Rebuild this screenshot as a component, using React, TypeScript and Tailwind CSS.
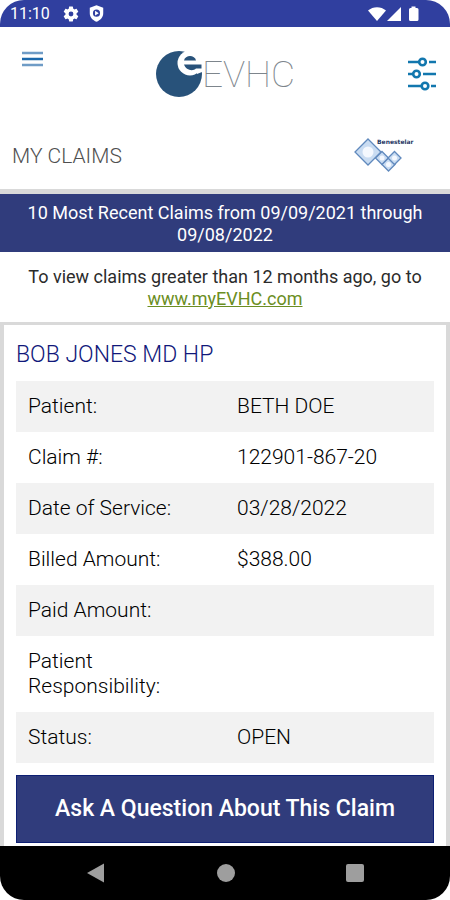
const claim = [
  { label: "Patient:", value: "BETH DOE" },
  { label: "Claim #:", value: "122901-867-20" },
  { label: "Date of Service:", value: "03/28/2022" },
  { label: "Billed Amount:", value: "$388.00" },
  { label: "Paid Amount:", value: "" },
  { label: "Patient Responsibility:", value: "" },
  { label: "Status:", value: "OPEN" },
]

function StatusBar() {
  return (
    <div className="flex h-[27px] items-center justify-between rounded-t-3xl bg-[#303f9f] pl-2.5 pr-[30px] text-white">
      <div className="flex items-center gap-3">
        <span className="text-base leading-none">11:10</span>
        <div className="flex items-center gap-2">
          <svg className="h-[18px] w-[18px]" viewBox="0 0 24 24" fill="currentColor" aria-hidden="true">
            <path d="M19.4 13c.04-.3.06-.65.06-1s-.02-.7-.07-1l2.1-1.6c.2-.14.24-.4.12-.6l-2-3.5c-.12-.2-.37-.28-.59-.2l-2.4 1c-.5-.4-1.04-.7-1.63-.95l-.36-2.6a.48.48 0 0 0-.48-.4h-4.3c-.24 0-.43.17-.47.4l-.36 2.6c-.6.24-1.13.56-1.62.94l-2.4-1c-.22-.07-.47 0-.6.22l-2 3.5c-.11.2-.07.46.13.6L4.6 11a7 7 0 0 0 0 2l-2.1 1.6c-.2.14-.24.4-.12.6l2 3.5c.12.2.37.28.59.2l2.4-1c.5.4 1.04.7 1.63.95l.36 2.6c.04.23.23.4.47.4h4.3c.24 0 .44-.17.47-.4l.36-2.6c.6-.24 1.13-.56 1.62-.94l2.4 1c.22.07.47 0 .6-.22l2-3.5c.11-.2.07-.46-.13-.6zM12 15.2a3.2 3.2 0 1 1 0-6.4 3.2 3.2 0 0 1 0 6.4z" />
          </svg>
          <svg className="h-[17px] w-[17px]" viewBox="0 0 24 24" fill="currentColor" aria-hidden="true">
            <path fillRule="evenodd" d="M12 .5 2.500 4v7.500C2.500 17 6.500 21.500 12 23.500c5.500-2 9.500-6.500 9.500-12V4zM12 6.500a5 5 0 1 1 0 10 5 5 0 0 1 0-10z" />
            <path d="M10 8.200v6.600l5.200-3.300z" />
          </svg>
        </div>
      </div>
      <svg className="h-4 w-[52px]" viewBox="0 0 52 16" fill="currentColor" aria-hidden="true">
        <path d="M0 4.500C5 0 13 0 18 4.500L9 15z" />
        <path d="M33 1v14H19z" />
        <path d="M41 3.500q0-1.500 1.500-1.500h1V.5h4V2h1.500q1.500 0 1.500 1.500v10q0 1.500-1.500 1.500h-6.500q-1.500 0-1.500-1.500z" />
      </svg>
    </div>
  )
}

function Logo() {
  return (
    <div className="flex items-center pr-2 text-[#7d858c]">
      <svg className="h-[46px] w-[46px]" viewBox="0 0 46 46" aria-hidden="true">
        <circle cx="23" cy="23" r="23" fill="#28527a" />
        <circle cx="34" cy="12" r="12.500" fill="#fff" />
        <path d="M40 16h6v5l-5 2z" fill="#fff" />
        <path d="M28 9.500C29 3.500 39 3.500 40 9.500z" fill="#28527a" />
        <path d="M28 13.500h17.500v4H40C37 20.500 30 19.500 28 13.500z" fill="#28527a" />
      </svg>
      <span className="text-[37px] font-thin leading-none">EVHC</span>
    </div>
  )
}

function PlanLogo() {
  return (
    <svg className="h-[38px] w-[60px]" viewBox="0 0 60 38" role="img" aria-label="Benestelar">
      <g stroke="#6089bd" strokeWidth="1.3" fill="#c9dcf2">
        <path d="M14 2 27 15 14 28 1 15z" />
        <path d="M28 14.500 34.500 21 28 27.500 21.500 21z" />
        <path d="M34.500 21 41 27.500 34.500 34 28 27.500z" />
        <path d="M40.500 14.500 47 21 40.500 27.500 34 21z" />
      </g>
      <g fill="#f4f8fe">
        <circle cx="14" cy="15" r="5.500" />
        <circle cx="28" cy="21" r="2.500" />
        <circle cx="34.500" cy="27.500" r="2.500" />
        <circle cx="40.500" cy="21" r="2.500" />
      </g>
      <text x="23" y="7" fill="#1f3864" fontSize="6" fontWeight="700" fontFamily="DejaVu Sans, sans-serif">
        Benestelar
      </text>
    </svg>
  )
}

function Header() {
  return (
    <header className="border-b-[5px] border-[#d9d9d9]">
      <div className="flex items-start justify-between px-3.5 pt-6">
        <button type="button" aria-label="Menu" className="px-2">
          <svg className="h-4 w-[21px]" viewBox="0 0 21 16" aria-hidden="true">
            <path d="M0 2h21M0 14h21" stroke="#6f9cc6" strokeWidth="2.5" />
            <path d="M0 8h21" stroke="#1c68ab" strokeWidth="2.500" />
          </svg>
        </button>
        <Logo />
        <button type="button" aria-label="Filter claims" className="pt-1.5">
          <svg className="h-[34px] w-7" viewBox="0 0 28 34" fill="none" stroke="#1277ae" strokeWidth="2.600" aria-hidden="true">
            <path d="M0 5h11M21 5h7M0 17h5M15 17h13M0 29h13M23 29h5" />
            <circle cx="14.500" cy="5" r="3.300" />
            <circle cx="8.500" cy="17" r="3.300" />
            <circle cx="17" cy="29" r="3.300" />
          </svg>
        </button>
      </div>
      <div className="flex items-center justify-between pb-3.5 pl-3 pr-9 pt-10">
        <h1 className="text-[21px] font-light leading-7 text-[#4f4f4f]">MY CLAIMS</h1>
        <PlanLogo />
      </div>
    </header>
  )
}

function ClaimCard() {
  return (
    <section className="grow border-x-4 border-t-[3px] border-[#d9d9d9] px-3 pb-[3px]">
      <h2 className="pb-3 pt-4 text-[23px] font-light leading-7 text-[#10187a]">BOB JONES MD HP</h2>
      <table className="w-full table-fixed text-left text-[21px] font-light leading-[25px] text-black">
        <tbody>
          {claim.map((row) => (
            <tr key={row.label} className="align-top odd:bg-[#f2f2f2]">
              <th scope="row" className="w-1/2 py-[13px] pl-3 pr-8 font-light">{row.label}</th>
              <td className="py-[13px] pl-3">{row.value}</td>
            </tr>
          ))}
        </tbody>
      </table>
      <button type="button" className="mt-3 w-full border border-[#0d1f73] bg-[#303c7c] py-[19px] text-[23px] leading-7 font-medium text-white">
        Ask A Question About This Claim
      </button>
    </section>
  )
}

function NavBar() {
  return (
    <nav className="flex h-[54px] items-center justify-around rounded-b-3xl bg-black px-[30px] text-[#9e9e9e]">
      <button type="button" aria-label="Back">
        <svg className="h-5 w-5" viewBox="0 0 20 20" fill="currentColor"><path d="M18 .5v19L1 10z" /></svg>
      </button>
      <button type="button" aria-label="Home" className="h-[18px] w-[18px] rounded-full bg-current"></button>
      <button type="button" aria-label="Recent apps" className="h-[18px] w-[18px] rounded-xs bg-current"></button>
    </nav>
  )
}

export default function App() {
  return (
    <div className="flex min-h-screen flex-col bg-white font-[Roboto,sans-serif]">
      <StatusBar />
      <Header />
      <p className="bg-[#303c7c] px-4 pb-1.5 pt-2 text-center text-lg leading-[22px] text-white">
        10 Most Recent Claims from 09/09/2021 through 09/08/2022
      </p>
      <p className="px-4 pb-3 pt-3.5 text-center text-lg leading-[22px] text-[#2b2b2b]">
        To view claims greater than 12 months ago, go to{" "}
        <a href="https://www.myEVHC.com" className="text-[#6b8e23] underline">www.myEVHC.com</a>
      </p>
      <ClaimCard />
      <NavBar />
    </div>
  )
}
